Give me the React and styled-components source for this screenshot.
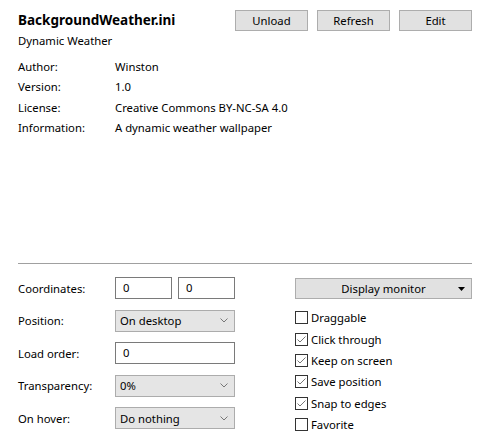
import React from 'react';
import styled, {createGlobalStyle} from 'styled-components';

const Global = createGlobalStyle`
body {
  margin: 0;
  background: #fff;
  font-family: 'Noto Sans', 'Liberation Sans', sans-serif;
  font-size: 11.3px;
  color: #000;
}
`

const Page = styled.div`
display: flex;
flex-direction: column;
height: 442px;
box-sizing: border-box;
padding: 10px 12px 7px 18px;
`
const Header = styled.div`
display: flex;
justify-content: space-between;
align-items: center;
height: 21px;
`
const Title = styled.h1`
margin: 0;
font-size: 13.5px;
font-weight: 700;
line-height: 21px;
`
const Buttons = styled.div`
display: flex;
gap: 9px;
`
const Button = styled.button`
width: 73px;
height: 21px;
background: #e1e1e1;
border: 1px solid #adadad;
font-family: inherit;
font-size: 11.3px;
color: #000;
padding: 0;
`
const Subtitle = styled.div`
line-height: 20px;
`
const InfoGrid = styled.div`
display: grid;
grid-template-columns: 97px auto;
grid-auto-rows: 20.5px;
align-items: center;
margin-top: 5px;
`
const Spacer = styled.div`
flex: 1;
`
const Separator = styled.hr`
margin: 0 0 13px 0;
border: none;
border-top: 1px solid #a0a0a0;
`
const Bottom = styled.div`
display: flex;
justify-content: space-between;
align-items: flex-start;
`
const Form = styled.div`
display: grid;
grid-template-columns: 97px 120px;
grid-auto-rows: 22px;
row-gap: 10.5px;
align-items: center;
`
const Pair = styled.div`
display: flex;
gap: 6px;
`
const Input = styled.div`
box-sizing: border-box;
height: 22px;
width: ${p => p.w || '120px'};
border: 1px solid #7a7a7a;
background: #fff;
padding: 0 7px;
line-height: 20px;
`
const Select = styled.div`
box-sizing: border-box;
height: 22px;
display: flex;
align-items: center;
justify-content: space-between;
border: 1px solid #acacac;
background: #e5e5e5;
padding: 0 6px 0 4px;
`
const Side = styled.div`
width: 177px;
display: flex;
flex-direction: column;
margin-top: 1px;
`
const MonitorButton = styled.div`
box-sizing: border-box;
height: 21px;
background: #e1e1e1;
border: 1px solid #adadad;
display: flex;
align-items: center;
justify-content: center;
position: relative;
margin-bottom: 8px;
`
const Arrow = styled.svg`
position: absolute;
right: 6px;
top: 8px;
`
const Check = styled.label`
display: flex;
align-items: center;
gap: 3px;
height: 21.3px;
`
const Box = styled.span`
box-sizing: border-box;
width: 13px;
height: 13px;
border: 1px solid #333;
background: #fff;
display: flex;
align-items: center;
justify-content: center;
`

const Chevron = () => (
  <svg width="8" height="5" viewBox="0 0 8 5">
    <polyline points="0.5,0.5 4,4 7.5,0.5" fill="none" stroke="#777" strokeWidth="1"/>
  </svg>
)

const CheckBox = ({checked, children}) => (
  <Check>
    <Box>
      {checked && (
        <svg width="11" height="11" viewBox="0 0 11 11">
          <polyline points="1.5,5.5 4,8 9.5,2.5" fill="none" stroke="#777" strokeWidth="1"/>
        </svg>
      )}
    </Box>
    {children}
  </Check>
)

const info = [
  ['Author:', 'Winston'],
  ['Version:', '1.0'],
  ['License:', 'Creative Commons BY-NC-SA 4.0'],
  ['Information:', 'A dynamic weather wallpaper'],
]

const options = [
  ['Draggable', false],
  ['Click through', true],
  ['Keep on screen', true],
  ['Save position', true],
  ['Snap to edges', true],
  ['Favorite', false],
]

export default function App() {
  return (
    <>
      <Global />
      <Page>
        <Header>
          <Title>BackgroundWeather.ini</Title>
          <Buttons>
            <Button>Unload</Button>
            <Button>Refresh</Button>
            <Button>Edit</Button>
          </Buttons>
        </Header>
        <Subtitle>Dynamic Weather</Subtitle>
        <InfoGrid>
          {info.map(([k, v]) => (
            <React.Fragment key={k}>
              <span>{k}</span>
              <span>{v}</span>
            </React.Fragment>
          ))}
        </InfoGrid>
        <Spacer />
        <Separator />
        <Bottom>
          <Form>
            <span>Coordinates:</span>
            <Pair>
              <Input w="57px">0</Input>
              <Input w="57px">0</Input>
            </Pair>
            <span>Position:</span>
            <Select>On desktop<Chevron /></Select>
            <span>Load order:</span>
            <Input>0</Input>
            <span>Transparency:</span>
            <Select>0%<Chevron /></Select>
            <span>On hover:</span>
            <Select>Do nothing<Chevron /></Select>
          </Form>
          <Side>
            <MonitorButton>
              Display monitor
              <Arrow width="7" height="4" viewBox="0 0 7 4">
                <polygon points="0,0 7,0 3.5,4" fill="#000"/>
              </Arrow>
            </MonitorButton>
            {options.map(([label, on]) => (
              <CheckBox key={label} checked={on}>{label}</CheckBox>
            ))}
          </Side>
        </Bottom>
      </Page>
    </>
  );
}
